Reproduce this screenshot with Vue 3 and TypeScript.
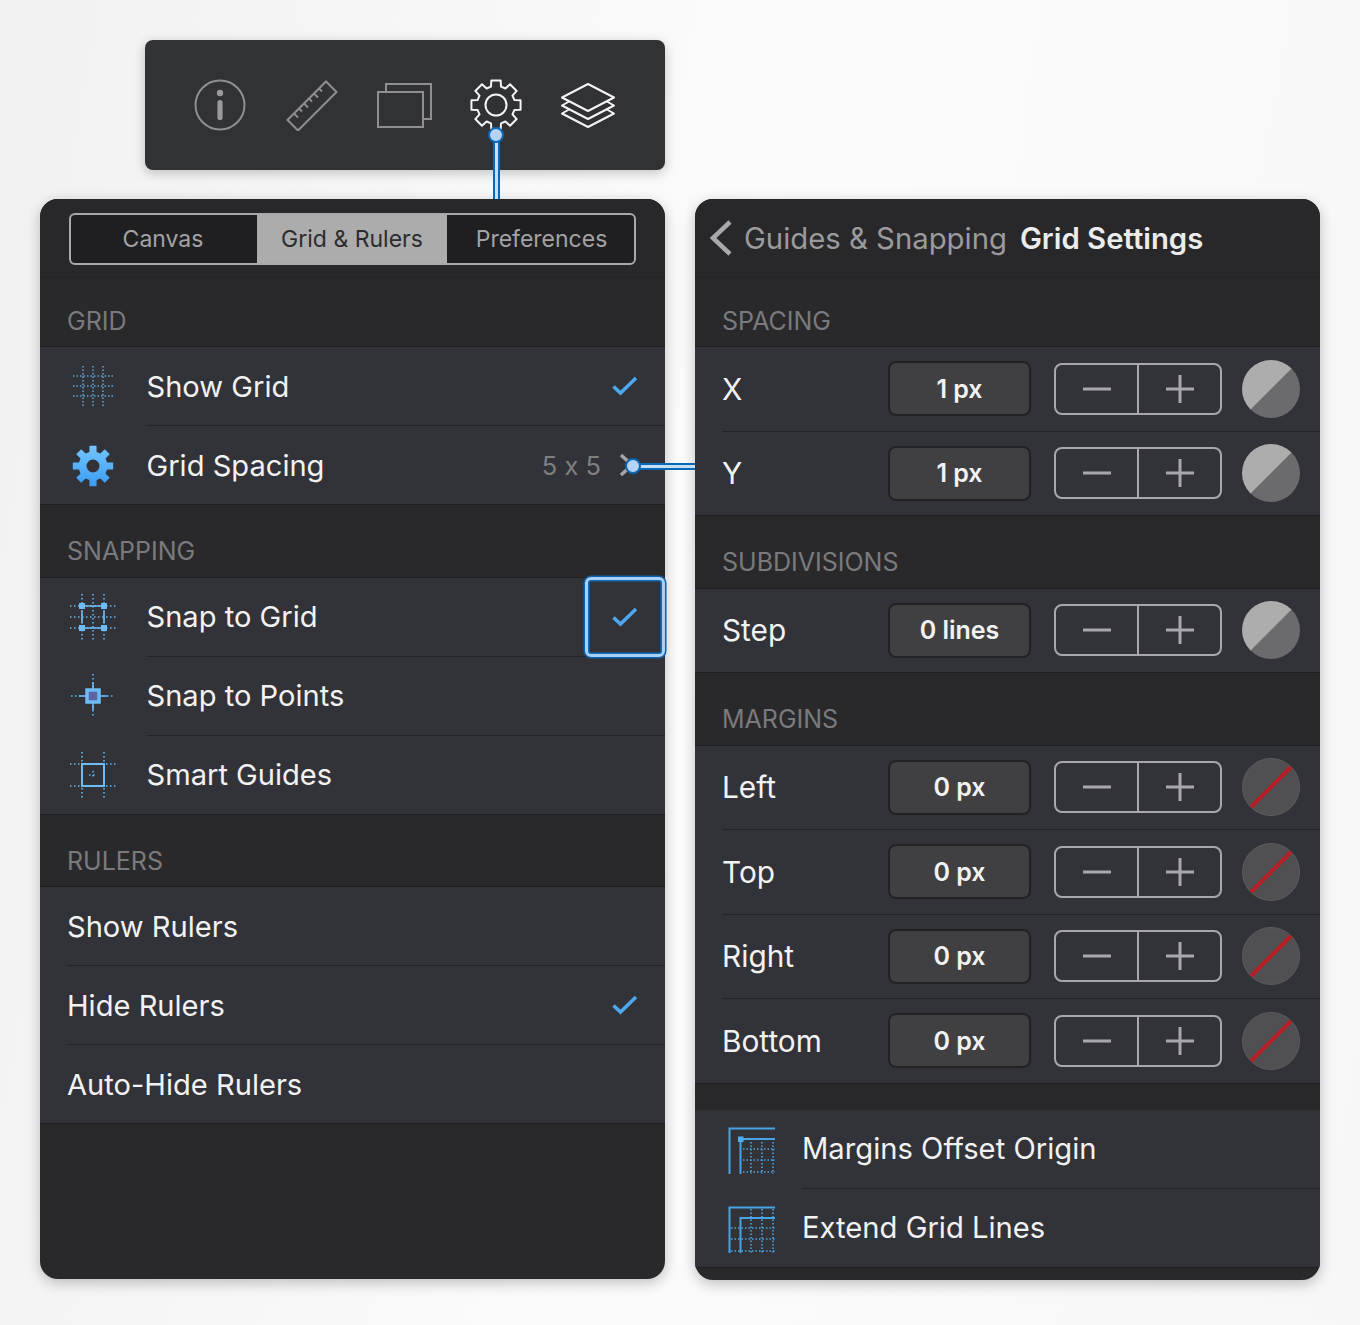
<script setup lang="ts">
/* Grid settings screens: toolbar, left list panel, right detail panel */
type ListRow = { label: string; icon?: string; check?: boolean; value?: string };
type ListGroup = { title: string; rows: ListRow[] };
type FieldRow = { label: string; value: string; none?: boolean };
type FieldGroup = { title: string; rows: FieldRow[] };

const tabs = ["Canvas", "Grid & Rulers", "Preferences"];

const listGroups: ListGroup[] = [
  {
    title: "GRID",
    rows: [
      { label: "Show Grid", icon: "grid", check: true },
      { label: "Grid Spacing", icon: "gear", value: "5 x 5" },
    ],
  },
  {
    title: "SNAPPING",
    rows: [
      { label: "Snap to Grid", icon: "snap", check: true },
      { label: "Snap to Points", icon: "points" },
      { label: "Smart Guides", icon: "guides" },
    ],
  },
  {
    title: "RULERS",
    rows: [
      { label: "Show Rulers" },
      { label: "Hide Rulers", check: true },
      { label: "Auto-Hide Rulers" },
    ],
  },
];

const fieldGroups: FieldGroup[] = [
  {
    title: "SPACING",
    rows: [
      { label: "X", value: "1 px" },
      { label: "Y", value: "1 px" },
    ],
  },
  { title: "SUBDIVISIONS", rows: [{ label: "Step", value: "0 lines" }] },
  {
    title: "MARGINS",
    rows: [
      { label: "Left", value: "0 px", none: true },
      { label: "Top", value: "0 px", none: true },
      { label: "Right", value: "0 px", none: true },
      { label: "Bottom", value: "0 px", none: true },
    ],
  },
];

// eight-toothed cog outline around a centre point
function cog(c: number, outer: number, inner: number, tooth: number): string {
  const pts: string[] = [];
  const step = Math.PI / 4;
  for (let i = 0; i < 8; i++) {
    const a = i * step - Math.PI / 2;
    const offs: [number, number][] = [
      [-tooth - 0.1, inner],
      [-tooth, outer],
      [tooth, outer],
      [tooth + 0.1, inner],
    ];
    for (const [o, r] of offs) {
      const t = a + o * step;
      pts.push(`${(c + r * Math.cos(t)).toFixed(2)} ${(c + r * Math.sin(t)).toFixed(2)}`);
    }
  }
  return "M" + pts.join("L") + "Z";
}

const toolbarCog = cog(27, 25, 19, 0.24);
const blueCog = cog(21, 20.5, 14.5, 0.22) + "M21 14.5a6.5 6.5 0 1 0 0 13a6.5 6.5 0 1 0 0-13Z";
</script>

<template>
  <div class="page">
    <div class="toolbar">
      <svg class="tool-info" width="52" height="52" viewBox="0 0 52 52">
        <circle cx="26" cy="26" r="24.5" fill="none" stroke="#8f8f91" stroke-width="2" />
        <circle cx="26" cy="14" r="3.2" fill="#9a9a9c" />
        <rect x="23.4" y="21" width="5.2" height="20" rx="2.6" fill="#9a9a9c" />
      </svg>
      <svg class="tool-ruler" width="52" height="52" viewBox="0 0 52 52">
        <path d="M1.5 41 40 2.5 50.5 13 12 51.5Z" fill="none" stroke="#8f8f91" stroke-width="2" />
        <path
          d="M8 34.500 12 38.500M13 29.500 16 32.500M18 24.500 22 28.500M23 19.500 26 22.500M28 14.500 32 18.500M33 9.500 36 12.500"
          stroke="#8f8f91"
          stroke-width="1.800"
        />
      </svg>
      <svg class="tool-windows" width="56" height="48" viewBox="0 0 56 48">
        <path d="M9 9V1H54V36H46" fill="none" stroke="#8f8f91" stroke-width="2" />
        <rect x="1" y="9" width="45" height="35" fill="none" stroke="#8f8f91" stroke-width="2" />
      </svg>
      <svg class="tool-cog" width="54" height="54" viewBox="0 0 54 54">
        <path :d="toolbarCog" fill="none" stroke="#f4f4f4" stroke-width="2" stroke-linejoin="round" />
        <circle cx="27" cy="27" r="10.500" fill="none" stroke="#f4f4f4" stroke-width="2" />
      </svg>
      <svg class="tool-layers" width="56" height="48" viewBox="0 0 56 48">
        <path d="M28 1 54 14.500 28 28 2 14.500Z" fill="none" stroke="#f4f4f4" stroke-width="2" stroke-linejoin="round" />
        <path d="M9 18.500 2 22.500 28 36 54 22.500 47 18.500" fill="none" stroke="#f4f4f4" stroke-width="2" stroke-linejoin="round" />
        <path d="M9 26.500 2 30.500 28 44 54 30.500 47 26.500" fill="none" stroke="#f4f4f4" stroke-width="2" stroke-linejoin="round" />
      </svg>
    </div>

    <div class="panels">
      <section class="panel">
        <header class="panel-head">
          <div class="tabs">
            <div v-for="(t, i) in tabs" :key="t" class="tab" :class="{ on: i === 1 }">{{ t }}</div>
          </div>
        </header>
        <template v-for="group in listGroups" :key="group.title">
          <h3 class="group-title">{{ group.title }}</h3>
          <div class="group-rows">
            <div v-for="row in group.rows" :key="row.label" class="list-row">
              <div v-if="row.icon" class="list-icon">
                <svg v-if="row.icon === 'grid'" width="40" height="41" viewBox="1 0 40 41">
                  <path
                    d="M11 0V41M21 0V41M31 0V41M1 10H41M1 20H41M1 30H41"
                    stroke="#62b7f2"
                    stroke-width="1.600"
                    stroke-dasharray="1.500 2"
                    fill="none"
                    opacity="0.850"
                  />
                </svg>
                <svg v-else-if="row.icon === 'gear'" width="42" height="42" viewBox="0 0 42 42">
                  <defs>
                    <linearGradient id="blue-cog" x1="0" y1="0" x2="0" y2="1">
                      <stop offset="0" stop-color="#74c5ff" />
                      <stop offset="1" stop-color="#3a9cf2" />
                    </linearGradient>
                  </defs>
                  <path :d="blueCog" fill="url(#blue-cog)" fill-rule="evenodd" stroke-linejoin="round" />
                </svg>
                <svg v-else-if="row.icon === 'snap'" width="48" height="48" viewBox="0 0 48 48">
                  <path
                    d="M13 1V47M24 1V47M35 1V47M1 13H47M1 24H47M1 35H47"
                    stroke="#62b7f2"
                    stroke-width="1.600"
                    stroke-dasharray="1.500 2.500"
                    fill="none"
                  />
                  <path d="M16 13H32M16 35H32M13 18V30M35 18V30" stroke="#6dbcf5" stroke-width="1.600" fill="none" />
                  <path d="M10 10h6v6h-6zM32 10h6v6h-6zM10 32h6v6h-6zM32 32h6v6h-6z" fill="#6dbcf5" />
                </svg>
                <svg v-else-if="row.icon === 'points'" width="48" height="48" viewBox="0 0 48 48">
                  <path d="M24 2V46M2 24H46" stroke="#62b7f2" stroke-width="1.600" stroke-dasharray="1.500 2.500" fill="none" />
                  <path d="M24 10V38M10 24H38" stroke="#6dbcf5" stroke-width="1.600" fill="none" />
                  <rect x="18" y="18" width="12" height="12" fill="#5b64a6" stroke="#6dbcf5" stroke-width="3.500" />
                </svg>
                <svg v-else width="48" height="48" viewBox="0 0 48 48">
                  <path
                    d="M13 1V47M35 1V47M1 13H47M1 35H47M24 20V28M20 24H28"
                    stroke="#62b7f2"
                    stroke-width="1.600"
                    stroke-dasharray="1.500 2.500"
                    fill="none"
                  />
                  <rect x="13" y="13" width="22" height="22" fill="none" stroke="#6dbcf5" stroke-width="2" />
                </svg>
              </div>
              <div class="list-body" :class="{ plain: !row.icon }">
                <span class="list-label">{{ row.label }}</span>
                <span v-if="row.value" class="list-value">{{ row.value }}</span>
                <svg v-if="row.value" class="chevron" width="18" height="26" viewBox="0 0 18 26">
                  <path d="M2 3 13 13 2 23" fill="none" stroke="#a5a5a7" stroke-width="3.500" />
                </svg>
                <svg v-if="row.check" class="check" width="26" height="20" viewBox="0 0 26 20">
                  <path d="M1.500 10.500 8.500 17 24 2" fill="none" stroke="#4da8ef" stroke-width="3.500" />
                </svg>
              </div>
            </div>
          </div>
        </template>
      </section>

      <section class="panel">
        <header class="panel-head crumbs">
          <svg class="back" width="26" height="38" viewBox="0 0 26 38">
            <path d="M22 3 5 19 22 35" fill="none" stroke="#a8a8aa" stroke-width="4.500" />
          </svg>
          <span class="crumb">Guides &amp; Snapping</span>
          <span class="crumb-now">Grid Settings</span>
        </header>
        <template v-for="group in fieldGroups" :key="group.title">
          <h3 class="group-title">{{ group.title }}</h3>
          <div class="group-rows">
            <div v-for="row in group.rows" :key="row.label" class="field-row">
              <span class="field-label">{{ row.label }}</span>
              <div class="field-value">{{ row.value }}</div>
              <div class="stepper">
                <div class="step-btn">
                  <svg width="30" height="30" viewBox="0 0 30 30"><path d="M1 15H29" stroke="#a8a8ac" stroke-width="3" /></svg>
                </div>
                <div class="step-btn">
                  <svg width="30" height="30" viewBox="0 0 30 30"><path d="M1 15H29M15 1V29" stroke="#a8a8ac" stroke-width="3" /></svg>
                </div>
              </div>
              <div v-if="!row.none" class="swatch"></div>
              <svg v-else class="swatch-none" width="58" height="58" viewBox="0 0 58 58">
                <circle cx="29" cy="29" r="28.500" fill="#505053" stroke="#5c5c5f" />
                <path d="M9 49 49 9" stroke="#b71f25" stroke-width="4" />
              </svg>
            </div>
          </div>
        </template>
        <div class="gap"></div>
        <div class="group-rows">
          <div class="extra-row">
            <svg class="extra-icon" width="48" height="48" viewBox="0 0 48 48">
              <path d="M1.500 47V1.500H47M12.500 47V12H47" fill="none" stroke="#45a5e6" stroke-width="2" />
              <path d="M23 15V47M34 15V47M45 15V47M15 22H47M15 33H47M15 45H47" stroke="#4aa6e4" stroke-width="1.600" stroke-dasharray="1.500 2" fill="none" />
              <rect x="10" y="9.500" width="5.500" height="5.500" fill="#4ab0f2" />
            </svg>
            <div class="extra-body">Margins Offset Origin</div>
          </div>
          <div class="extra-row">
            <svg class="extra-icon" width="48" height="48" viewBox="0 0 48 48">
              <path d="M23 3V47M34 3V47M45 3V47M3 22H47M3 33H47M3 45H47" stroke="#4aa6e4" stroke-width="1.600" stroke-dasharray="1.500 2" fill="none" />
              <path d="M1.500 47V1.500H47M12.500 47V12H47" fill="none" stroke="#45a5e6" stroke-width="2" />
            </svg>
            <div class="extra-body">Extend Grid Lines</div>
          </div>
        </div>
      </section>
    </div>

    <!-- connectors and the focus frame sit over the panels -->
    <div class="link link-v"></div>
    <div class="link-dot dot-top"></div>
    <div class="link link-h"></div>
    <div class="link-dot dot-side"></div>
    <div class="focus-box"></div>
  </div>
</template>

<style scoped>
.page {
  position: relative;
  width: 1360px;
  height: 1325px;
  padding-top: 40px;
  box-sizing: border-box;
  font-family: Inter, "Liberation Sans", sans-serif;
  font-feature-settings: "calt" 0;
  overflow: hidden;
}

.toolbar {
  position: relative;
  width: 520px;
  height: 130px;
  margin-left: 145px;
  background: #313236;
  border-radius: 8px;
  box-shadow: 0 3px 12px rgba(0, 0, 0, 0.22);
}
.toolbar svg {
  position: absolute;
}
.tool-info {
  left: 49px;
  top: 39px;
}
.tool-ruler {
  left: 141px;
  top: 39px;
}
.tool-windows {
  left: 232px;
  top: 43px;
}
.tool-cog {
  left: 324px;
  top: 38px;
}
.tool-layers {
  left: 415px;
  top: 43px;
}

.panels {
  display: flex;
  align-items: flex-start;
  gap: 30px;
  margin: 29px 0 0 40px;
}
.panel {
  width: 625px;
  height: 1081px;
  background: #29292c;
  border-radius: 18px;
  overflow: hidden;
  box-shadow: 0 4px 14px rgba(0, 0, 0, 0.24);
}
.panel:first-child {
  height: 1080px;
}
.panel-head {
  height: 79px;
  box-sizing: border-box;
  padding: 14px 29px 0;
  background: #28282b;
  border-bottom: 1px solid #242427;
}
.tabs {
  display: flex;
  width: 567px;
  height: 52px;
  box-sizing: border-box;
  border: 2px solid #a9a9ab;
  border-radius: 6px;
  overflow: hidden;
  background: #1f1f21;
}
.tab {
  flex: none;
  box-sizing: border-box;
  width: 186px;
  padding-right: 2px;
  display: flex;
  align-items: center;
  justify-content: center;
  font-size: 23px;
  color: #a3a3a5;
}
.tab.on {
  width: 190px;
  padding-right: 0;
  background: #acacac;
  color: #2c2c2f;
}
.tab:last-child {
  width: 187px;
  padding: 0 0 0 2px;
}

.crumbs {
  display: flex;
  align-items: center;
  padding: 0 0 0 13px;
  font-size: 29.300px;
}
.back {
  margin-right: 10px;
}
.crumb {
  color: #9b9b9d;
  margin-right: 13px;
}
.crumb-now {
  color: #ececec;
  font-weight: 600;
}

.group-title {
  margin: 0;
  height: 72.500px;
  box-sizing: border-box;
  padding: 31px 0 0 27px;
  font-size: 25px;
  line-height: 30px;
  font-weight: 400;
  color: #7a7a7c;
  background: #29292c;
  border-bottom: 1px solid #1f1f21;
}
.panel-head + .group-title {
  height: 69px;
  padding-top: 28px;
}
.group-rows {
  background: #323338;
  box-shadow: inset 0 -1px 0 #1f1f21;
}

.list-row {
  position: relative;
  display: flex;
  height: 79px;
}
.list-icon {
  flex: none;
  width: 106.500px;
  display: flex;
  align-items: center;
  justify-content: center;
}
.list-body {
  flex: 1;
  display: flex;
  align-items: center;
  padding-right: 27px;
  border-bottom: 1px solid #232326;
}
.list-body.plain {
  margin-left: 27px;
}
.list-row:last-child .list-body {
  border-bottom-color: transparent;
}
.list-label {
  flex: 1;
  font-size: 29.100px;
  color: #f2f2f2;
}
.list-value {
  font-size: 25.500px;
  color: #7f7f81;
  margin-right: 18px;
}
.chevron {
  margin-right: 1px;
}

.field-row {
  display: flex;
  align-items: center;
  height: 84.500px;
  margin-left: 27px;
  padding-right: 20px;
  border-bottom: 1px solid #242427;
  box-sizing: border-box;
}
.field-row:last-child {
  border-bottom-color: transparent;
}
.field-label {
  width: 166px;
  font-size: 29.800px;
  color: #f2f2f2;
}
.field-value {
  width: 143px;
  height: 55px;
  box-sizing: border-box;
  display: flex;
  align-items: center;
  justify-content: center;
  background: #404042;
  border: 2px solid #222225;
  border-radius: 8px;
  font-size: 25px;
  font-weight: 600;
  color: #f2f2f2;
}
.stepper {
  display: flex;
  width: 168px;
  height: 52px;
  box-sizing: border-box;
  margin-left: 23px;
  border: 2px solid #a8a8ac;
  border-radius: 8px;
}
.step-btn {
  flex: 1;
  display: flex;
  align-items: center;
  justify-content: center;
}
.step-btn + .step-btn {
  border-left: 2px solid #a8a8ac;
}
.swatch,
.swatch-none {
  flex: none;
  width: 58px;
  height: 58px;
  margin-left: 20px;
}
.swatch {
  border-radius: 50%;
  background: linear-gradient(135deg, #adadad 49.600%, #6b6b6d 50.400%);
}

.gap {
  height: 26px;
  background: #29292c;
}
.extra-row {
  display: flex;
  height: 79px;
}
.extra-icon {
  flex: none;
  align-self: center;
  margin: 4px 26px 0 33px;
}
.extra-body {
  flex: 1;
  display: flex;
  align-items: center;
  font-size: 29.200px;
  color: #f2f2f2;
  border-bottom: 1px solid #232326;
}
.extra-row:last-child .extra-body {
  border-bottom-color: transparent;
}

.link {
  position: absolute;
  background: #c6dff9;
}
.link-v {
  left: 493px;
  top: 135px;
  width: 3px;
  height: 64px;
  border-left: 2px solid #0b68b5;
  border-right: 2px solid #0b68b5;
}
.link-h {
  left: 634px;
  top: 463px;
  width: 61px;
  height: 2.500px;
  border-top: 2px solid #0b68b5;
  border-bottom: 2px solid #0b68b5;
}
.link-dot {
  position: absolute;
  width: 16px;
  height: 16px;
  box-sizing: border-box;
  border-radius: 50%;
  background: #b5d3f5;
  border: 2.500px solid #0b68b5;
}
.dot-top {
  left: 488px;
  top: 127px;
}
.dot-side {
  left: 625px;
  top: 458px;
}
.focus-box {
  position: absolute;
  left: 585px;
  top: 577px;
  width: 80px;
  height: 80px;
  box-sizing: border-box;
  border: 3.500px solid #a9d0f7;
  border-radius: 6px;
  box-shadow: 0 0 0 1.500px #0c63ad, inset 0 0 0 1.500px #0f6fbe;
}
</style>

<style>
html,
body {
  margin: 0;
  background: linear-gradient(100deg, #f1f1f1, #fbfbfb 50%, #f7f7f7);
}
</style>
